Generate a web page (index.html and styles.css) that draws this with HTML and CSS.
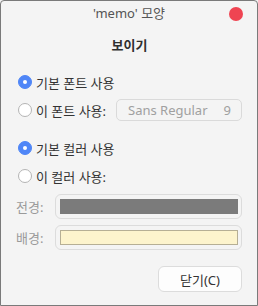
FILE: index.html
```html
<!DOCTYPE html>
<html lang="ko">
<head>
<meta charset="utf-8">
<link rel="stylesheet" href="styles.css">
</head>
<body>
<div class="window">
  <div class="titlebar">
    <span></span>
    <span class="title">'memo' 모양</span>
    <span class="close"></span>
  </div>
  <div class="content">
    <div class="heading">보이기</div>
    <div class="group">
      <div class="row"><span class="radio on"></span><span class="label">기본 폰트 사용</span></div>
      <div class="row"><span class="radio"></span><span class="label">이 폰트 사용:</span>
        <span class="fontbtn"><span>Sans Regular</span><span>9</span></span></div>
    </div>
    <div class="group g2">
      <div class="row"><span class="radio on"></span><span class="label">기본 컬러 사용</span></div>
      <div class="row"><span class="radio"></span><span class="label">이 컬러 사용:</span></div>
    </div>
    <div class="colors">
      <div class="crow"><span class="clabel">전경:</span><span class="cbtn"><span class="swatch fg"></span></span></div>
      <div class="crow"><span class="clabel">배경:</span><span class="cbtn"><span class="swatch bg"></span></span></div>
    </div>
    <div class="actions"><span class="button">닫기(C)</span></div>
  </div>
</div>
</body>
</html>
```
FILE: styles.css
```css
html, body { margin: 0; padding: 0; }
body {
  font-family: "Noto Sans", "Noto Sans CJK KR", sans-serif;
  font-size: 13px;
  color: #333;
  background: #f4f4f4;
}
.window {
  width: 258px;
  height: 306px;
  box-sizing: border-box;
  border: 1px solid #7a7a7a;
  border-radius: 4px 4px 0 0;
  background: #f4f4f4;
  overflow: hidden;
}
.titlebar {
  height: 24px;
  display: grid;
  grid-template-columns: 1fr auto 1fr;
  align-items: center;
}
.title { color: #555; font-size: 13px; line-height: 16px; }
.close {
  justify-self: end;
  width: 14px; height: 14px;
  border-radius: 50%;
  background: #ef4452;
  margin-right: 14px;
  margin-top: 1px;
}
.content { padding: 0 15px 0 16px; }
.heading {
  margin-top: 8px;
  height: 24px;
  line-height: 24px;
  text-align: center;
  font-weight: bold;
  color: #2f2f2f;
}
.group { margin-top: 11px; }
.g2 { margin-top: 10px; }
.row {
  height: 28px;
  display: flex;
  align-items: center;
}
.radio {
  width: 14px; height: 14px;
  box-sizing: border-box;
  border-radius: 50%;
  border: 1px solid #b4b4b4;
  background: #fff;
  margin-left: 1px;
  margin-right: 4px;
  display: flex;
  align-items: center;
  justify-content: center;
}
.radio.on { background: #4f86f7; border-color: #4f86f7; }
.radio.on::after {
  content: "";
  width: 4px; height: 4px;
  border-radius: 50%;
  background: #fff;
}
.label { color: #333; }
.fontbtn {
  margin-left: auto;
  width: 126px;
  height: 22px;
  box-sizing: border-box;
  border: 1px solid #dadada;
  border-radius: 5px;
  display: flex;
  align-items: center;
  justify-content: space-between;
  padding: 0 10px 0 11px;
  color: #a0a0a0;
}
.colors { margin-top: 4px; display: flex; flex-direction: column; gap: 6px; }
.crow { display: flex; align-items: center; height: 25px; }
.clabel { width: 39px; color: #9a9a9a; margin-left: -1px; }
.cbtn {
  flex: 1;
  height: 25px;
  box-sizing: border-box;
  border: 1px solid #dcdcdc;
  border-radius: 6px;
  padding: 4px 3px 4px 4px;
  display: flex;
}
.swatch { flex: 1; box-sizing: border-box; }
.swatch.fg { background: #7b7b7b; }
.swatch.bg { background: #fdf4cd; border: 1px solid #b6af95; }
.actions { display: flex; justify-content: flex-end; margin-top: 16px; }
.button {
  width: 84px;
  height: 26px;
  box-sizing: border-box;
  border: 1px solid #dcdcdc;
  border-radius: 6px;
  background: #fdfdfd;
  display: flex;
  align-items: center;
  justify-content: center;
  color: #333;
}
```
